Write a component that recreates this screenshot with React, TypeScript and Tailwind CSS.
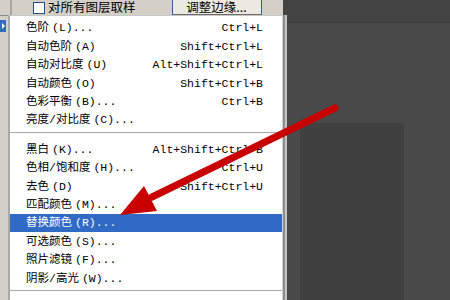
import React from 'react';

interface MenuRow {
  label?: string;
  hint?: string;
  keys?: string;
  sep?: boolean;
  active?: boolean;
  disabled?: boolean;
}

const rows: MenuRow[] = [
  { label: '色阶', hint: '(L)...', keys: 'Ctrl+L' },
  { label: '自动色阶', hint: '(A)', keys: 'Shift+Ctrl+L' },
  { label: '自动对比度', hint: '(U)', keys: 'Alt+Shift+Ctrl+L' },
  { label: '自动颜色', hint: '(O)', keys: 'Shift+Ctrl+B' },
  { label: '色彩平衡', hint: '(B)...', keys: 'Ctrl+B' },
  { label: '亮度/对比度', hint: '(C)...' },
  { sep: true },
  { label: '黑白', hint: '(K)...', keys: 'Alt+Shift+Ctrl+B' },
  { label: '色相/饱和度', hint: '(H)...', keys: 'Ctrl+U' },
  { label: '去色', hint: '(D)', keys: 'Shift+Ctrl+U' },
  { label: '匹配颜色', hint: '(M)...' },
  { label: '替换颜色', hint: '(R)...', active: true },
  { label: '可选颜色', hint: '(S)...' },
  { label: '照片滤镜', hint: '(F)...' },
  { label: '阴影/高光', hint: '(W)...' },
  { sep: true },
  { label: '反相', hint: '(I)', keys: 'Ctrl+I', disabled: true },
];

const MenuItem = ({ row }: { row: MenuRow }) => {
  if (row.sep) {
    return (
      <div className="h-[11px] pt-[3px] shrink-0">
        <div className="h-[1px] bg-[#a7a6aa]" />
        <div className="h-[1px] bg-white" />
      </div>
    );
  }
  const color = row.active ? 'bg-[#316ac5] text-white' : row.disabled ? 'text-[#c4c4c4]' : 'text-black';
  return (
    <div className={`h-[18.4px] shrink-0 flex items-center justify-between pl-[16px] pr-[19px] ${color}`}>
      <span className="text-[11.5px] leading-none whitespace-pre">
        {row.label}
        <span className="ml-[3px]">{row.hint}</span>
      </span>
      {row.keys && <span className="text-[11.5px] leading-none">{row.keys}</span>}
    </div>
  );
};

export default function App() {
  return (
    <div className="relative w-[450px] h-[300px] overflow-hidden flex bg-[#494949] font-['Liberation_Mono','Noto_Sans_CJK_SC',monospace]">
      {/* left: toolbar + menu */}
      <div className="w-[283px] h-full flex flex-col">
        <div className="h-[15px] shrink-0 bg-[#d4d0c8] flex items-center text-black">
          <div className="w-[10px]" />
          <div className="w-[2px] h-full bg-[#aaa69e]" />
          <div className="ml-[21px] w-[12px] h-[12px] border border-[#1c5180] bg-white" />
          <span className="ml-[3px] text-[12.5px] leading-none font-['Noto_Sans_CJK_SC',sans-serif]">对所有图层取样</span>
          <div className="ml-[36px] w-[90px] h-full border-x border-b border-x-[#2f5f9e] border-b-[#6f6c66] bg-[#ece9e0] flex items-center justify-center">
            <span className="text-[12.5px] leading-none font-['Noto_Sans_CJK_SC',sans-serif]">调整边缘...</span>
          </div>
        </div>
        <div className="flex-1 flex min-h-0">
          <div className="w-[8px] bg-[#d4d0c8] flex flex-col">
            <div className="h-[1px] bg-[#8c8a84]" />
            <div className="mt-[4px] h-[12px] w-[6px] bg-[#316ac5] flex items-center justify-center">
              <div className="w-0 h-0 border-y-[3px] border-y-transparent border-l-[3px] border-l-white" />
            </div>
          </div>
          <div className="relative z-10 flex-1 bg-white border-l-2 border-l-[#a9a9a9] border-t border-t-[#c8c8c8] border-r border-r-[#d0d0d0] shadow-[2px_0_0_#8e8e8e,4px_0_0_#c6c6c6] pt-[3px] flex flex-col">
            {rows.map((r, i) => (
              <MenuItem key={i} row={r} />
            ))}
          </div>
        </div>
      </div>

      {/* right: canvas area */}
      <div className="flex-1 h-full flex flex-col">
        <div className="h-[23px] shrink-0 bg-[#434343] border-b border-b-[#3c3c3c]" />
        <div className="flex-1 pt-[100px] pl-[17px]">
          <div className="w-[104px] h-full bg-[#404040]" />
        </div>
      </div>

      {/* red annotation arrow */}
      <svg className="absolute inset-0 z-20 pointer-events-none" width="450" height="300" viewBox="0 0 450 300">
        <line x1="335" y1="108" x2="152" y2="197" stroke="#c80000" strokeWidth="7" strokeLinecap="round" />
        <polygon points="120,215 144,186 157,211" fill="#c80000" />
      </svg>
    </div>
  );
}
